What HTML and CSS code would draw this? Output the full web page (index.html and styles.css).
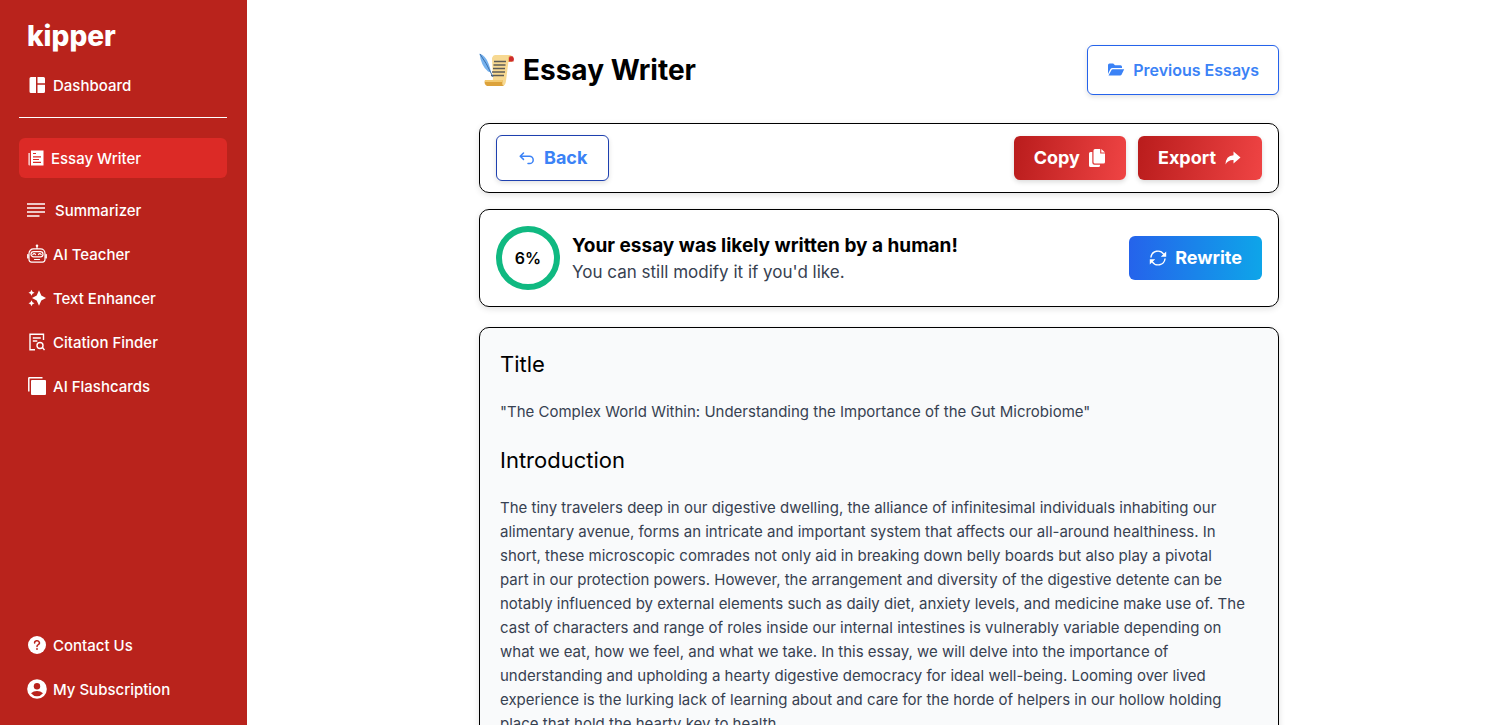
FILE: index.html
```
<!DOCTYPE html>
<html lang="en">
<head>
    <meta charset="UTF-8">
    <meta name="viewport" content="width=device-width, initial-scale=1.0">
    <title>Kipper - Essay Writer</title>
    <link rel="stylesheet" href="styles.css">
</head>
<body>
    <div class="app">
        <aside class="sidebar">
            <a href="#" class="logo">kipper</a>
            <a href="#" class="nav-link">
                <svg class="icon" viewBox="0 0 20 20" fill="currentColor"><path d="M4 2h5v16H4a1.500 1.500 0 0 1-1.500-1.500v-13A1.500 1.500 0 0 1 4 2zM10.500 2H16.500A1.500 1.500 0 0 1 18 3.500V8.300H10.500zM10.500 9.800H18v6.700a1.500 1.500 0 0 1-1.500 1.500h-6z"/></svg>
                <span>Dashboard</span>
            </a>
            <hr class="divider">
            <nav class="nav">
                <a href="#" class="nav-link active">
                    <svg class="icon icon-news" viewBox="0 0 18 20" fill="none"><path fill="#fff" d="M4 2.500H16.500v15H4zM1.500 5h1.200v12.500H2.500a1 1 0 0 1-1-1z"/><path stroke="#dc2a26" stroke-width="1.200" d="M6 5.500h3M6 8.800h8M6 11.500h6M6 14.300h8"/></svg>
                    <span>Essay Writer</span>
                </a>
                <a href="#" class="nav-link">
                    <svg class="icon icon-lines" viewBox="0 0 22 20" stroke="currentColor" stroke-width="1.600"><path d="M0 4h18M0 8h18M0 12h18M0 16h12.500"/></svg>
                    <span>Summarizer</span>
                </a>
                <a href="#" class="nav-link">
                    <svg class="icon" viewBox="0 0 20 20" fill="none" stroke="currentColor" stroke-width="1.200" stroke-linecap="round"><path d="M10 2.500v2.200M6.500 4.900h7a4.500 4.500 0 0 1 4.500 4.500v6.200a2.500 2.500 0 0 1-2.500 2.500H4.500a2.500 2.500 0 0 1-2.500-2.500V9.400a4.500 4.500 0 0 1 4.500-4.500zM.7 10.500v3.500M19.300 10.500v3.500M7.500 15.500h5"/><circle cx="10" cy="1.800" r=".7"/><rect x="4" y="7.600" width="12" height="5.200" rx="2.600"/><path d="M5.800 10.500q1.400-1.800 2.800 0M11.400 10.500q1.400-1.800 2.800 0"/></svg>
                    <span>AI Teacher</span>
                </a>
                <a href="#" class="nav-link">
                    <svg class="icon" viewBox="0 0 20 20" fill="currentColor"><path d="M12 2.200l2.300 5.300L19 10l-4.700 2.500L12 17.800l-2.300-5.300L5 10l4.700-2.500zM4.500 1.700l1 2 2 1-2 1-1 2-1-2-2-1 2-1zM4.500 12.300l1 2 2 1-2 1-1 2-1-2-2-1 2-1z"/></svg>
                    <span>Text Enhancer</span>
                </a>
                <a href="#" class="nav-link">
                    <svg class="icon" viewBox="0 0 20 20" fill="none" stroke="currentColor" stroke-width="1.400"><path d="M8 17.800H3V2.200h13.500V8M5.800 6h8M5.800 9h4.500M15.500 15.500l2 2.700"/><circle cx="13" cy="13.500" r="3"/></svg>
                    <span>Citation Finder</span>
                </a>
                <a href="#" class="nav-link">
                    <svg class="icon" viewBox="0 0 20 20"><path fill="none" stroke="currentColor" stroke-width="1.500" d="M1.800 15.500V2.300a.5.500 0 0 1 .5-.5h13.200"/><rect x="4" y="4" width="15" height="15" rx="1" fill="currentColor"/></svg>
                    <span>AI Flashcards</span>
                </a>
            </nav>
            <div class="nav-bottom">
                <a href="#" class="nav-link">
                    <svg class="icon" viewBox="0 0 20 20"><circle cx="10" cy="10" r="9" fill="currentColor"/><path fill="none" stroke="#b9231c" stroke-width="1.500" stroke-linecap="round" d="M7.600 8a2.400 2.100 0 1 1 3.700 1.600Q10 10.300 10 11.500"/><circle cx="10" cy="14" r=".9" fill="#b9231c"/></svg>
                    <span>Contact Us</span>
                </a>
                <a href="#" class="nav-link">
                    <svg class="icon" viewBox="0 0 20 20"><circle cx="10" cy="10" r="9.800" fill="currentColor"/><circle cx="10" cy="7.300" r="3.200" fill="#b9231c"/><path fill="#b9231c" d="M4 14.200Q6.500 12 10 12t6 2.200Q13.500 17.200 10 17.200T4 14.200z"/></svg>
                    <span>My Subscription</span>
                </a>
            </div>
        </aside>

        <main class="main">
            <div class="content">
                <header class="page-header">
                    <h1 class="page-title">
                        <svg class="title-icon" viewBox="0 0 36 36"><path fill="#f7d992" d="M13 6q1-3 3-3h17q-3 1-3.500 6L27 29q-.5 5-4 5H9q4-1 5-7z"/><path fill="#e9b867" d="M30 4q4-.5 4.500 2L33 10h-4q-.5-4 1-6z"/><path fill="#cf2b2b" d="M30 5.500q1-2 4-1 1.500 2 .5 5h-4.500z"/><path fill="#dca23b" d="M6 28h18q-2 5 1 6H8Q4.500 32 6 28z"/><path fill="#f3ca70" d="M6 28h18l-.5 2H6z"/><path stroke="#5d5c58" stroke-width="1.300" d="M15 9.500h12M14.500 13h12M14 16.500h12M13 20h13M12 23.500h13"/><path fill="#76b2ee" d="M.5 1.500Q7 4 9.500 11.500q2 5 2.500 9l-3-1Q2 14 .5 1.500z"/><path fill="none" stroke="#3d70ac" stroke-width="1" d="M1 2q7 10 11 19l2 4"/></svg>
                        Essay Writer
                    </h1>
                    <button type="button" class="btn btn-previous">
                        <svg class="btn-icon" viewBox="0 0 18 18" fill="currentColor"><path d="M1 13V4a1.500 1.500 0 0 1 1.500-1.500h3.700L8 4.300h5.500A1.500 1.500 0 0 1 15 5.800V7H5.500A2.500 2.500 0 0 0 3.300 8.300zM1.500 14.500l3-5.500a1.500 1.500 0 0 1 1.300-.8h11.400L14.500 13.700a1.500 1.500 0 0 1-1.300.8z"/></svg>
                        Previous Essays
                    </button>
                </header>

                <section class="card toolbar">
                    <button type="button" class="btn btn-back">
                        <svg class="btn-icon" viewBox="0 0 18 18" fill="none" stroke="currentColor" stroke-width="1.500" stroke-linecap="round" stroke-linejoin="round"><path d="M5.500 4L2.200 7.200l3.300 3.200M2.500 7.200h9a3.700 3.700 0 0 1 0 7.400H10"/></svg>
                        Back
                    </button>
                    <div class="toolbar-actions">
                        <button type="button" class="btn btn-red">
                            Copy
                            <svg class="btn-icon" viewBox="0 0 18 18" fill="currentColor"><path d="M7 0h5.200v4.500H17V13a1.500 1.500 0 0 1-1.500 1.500H7A1.500 1.500 0 0 1 5.500 13V1.500A1.500 1.500 0 0 1 7 0zM13.300 0L17 3.500h-3.700zM1 4.500A1.500 1.500 0 0 1 2.500 3H4.300v10.500A2.200 2.200 0 0 0 6.500 15.700H12v.8a1.500 1.500 0 0 1-1.500 1.500h-8A1.500 1.500 0 0 1 1 16.500z"/></svg>
                        </button>
                        <button type="button" class="btn btn-red">
                            Export
                            <svg class="btn-icon" viewBox="0 0 18 18" fill="currentColor"><path d="M9.500 2.500L16.500 8.600 9.500 14.500V11Q4 10.700 1.500 15.500 1.700 6.800 9.500 6.200z"/></svg>
                        </button>
                    </div>
                </section>

                <section class="card score">
                    <div class="score-ring">6%</div>
                    <div class="score-text">
                        <h2 class="score-title">Your essay was likely written by a human!</h2>
                        <p class="score-hint">You can still modify it if you'd like.</p>
                    </div>
                    <button type="button" class="btn btn-blue">
                        <svg class="btn-icon" viewBox="0 0 18 18" fill="none" stroke="currentColor" stroke-width="1.400" stroke-linecap="round" stroke-linejoin="round"><path d="M2 8A7 7 0 0 1 14.700 5.200M16 10A7 7 0 0 1 3.300 12.800"/><path fill="currentColor" stroke="none" d="M17.200 2.500V7.700H11.800zM.8 15.500V10.300H6.200z"/></svg>
                        Rewrite
                    </button>
                </section>

                <article class="card essay">
                    <h2>Title</h2>
                    <p>"The Complex World Within: Understanding the Importance of the Gut Microbiome"</p>
                    <h2>Introduction</h2>
                    <p>The tiny travelers deep in our digestive dwelling, the alliance of infinitesimal individuals inhabiting our alimentary avenue, forms an intricate and important system that affects our all-around healthiness. In short, these microscopic comrades not only aid in breaking down belly boards but also play a pivotal<br> part in our protection powers. However, the arrangement and diversity of the digestive detente can be notably influenced by external elements such as daily diet, anxiety levels, and medicine make use of. The cast of characters and range of roles inside our internal intestines is vulnerably variable depending on what we eat, how we feel, and what we take. In this essay, we will delve into the importance of understanding and upholding a hearty digestive democracy for ideal well-being. Looming over lived experience is the lurking lack of learning about and care for the horde of helpers in our hollow holding place that hold the hearty key to health.</p>
                </article>
            </div>
        </main>
    </div>
</body>
</html>
```
FILE: styles.css
```
* {
    box-sizing: border-box;
}

body {
    margin: 0;
    font-family: Inter, "Liberation Sans", sans-serif;
    font-size: 15px;
    line-height: 24px;
    color: #000;
    background-color: #fff;
}

h1, h2, p {
    margin: 0;
}

.app {
    display: flex;
    height: 100vh;
    overflow: hidden;
}

/* Sidebar */
.sidebar {
    display: flex;
    flex-direction: column;
    flex: 0 0 247px;
    padding: 16px 20px 16px 19px;
    background-color: #b9231c;
    color: #fff;
}

.logo {
    padding: 0 8px;
    margin-bottom: 9px;
    font-size: 28px;
    line-height: 40px;
    font-weight: 800;
    color: #fff;
    text-decoration: none;
}

.nav-link {
    display: flex;
    align-items: center;
    gap: 6px;
    height: 40px;
    padding: 0 8px;
    border-radius: 6px;
    color: #fff;
    font-weight: 500;
    text-decoration: none;
}

.nav-link span {
    padding-top: 1px;
}

.nav-link.active {
    margin-bottom: 8px;
    background-color: #dc2a26;
}

.icon {
    width: 20px;
    height: 20px;
}

.icon-news {
    width: 18px;
}

.icon-lines {
    width: 22px;
}

.divider {
    width: 100%;
    margin: 12px 0 20px;
    border: 0;
    border-top: 1px solid #fff;
}

.nav, .nav-bottom {
    display: flex;
    flex-direction: column;
    gap: 4px;
}

.nav-bottom {
    margin-top: auto;
}

/* Main column */
.main {
    flex: 1;
    min-width: 0;
    padding: 45px 16px 40px 22px;
    overflow-y: auto;
    scrollbar-width: none;
}

.content {
    max-width: 800px;
    margin: 0 auto;
}

.page-header {
    display: flex;
    justify-content: space-between;
    align-items: center;
    margin-bottom: 28px;
}

.page-title {
    display: flex;
    align-items: center;
    gap: 8px;
    font-size: 28px;
    line-height: 36px;
    font-weight: 700;
}

.title-icon {
    width: 36px;
    height: 36px;
}

.card {
    border: 1px solid #000;
    border-radius: 10px;
    box-shadow: 0 2px 6px rgba(0, 0, 0, 0.12);
}

/* Buttons */
.btn {
    display: flex;
    align-items: center;
    gap: 8px;
    height: 44px;
    padding: 0 20px;
    border: 0;
    border-radius: 6px;
    font-family: inherit;
    font-size: 18px;
    line-height: 28px;
    font-weight: 700;
    color: #fff;
    cursor: pointer;
}

.btn-icon {
    width: 18px;
    height: 18px;
}

.btn-previous, .btn-back {
    border: 1px solid #2563eb;
    background-color: #fff;
    color: #3b82f6;
    box-shadow: 0 2px 5px rgba(0, 0, 0, 0.12);
}

.btn-previous {
    height: 50px;
    padding: 0 19px;
    font-size: 16px;
    font-weight: 600;
}

.btn-back {
    height: 46px;
    padding: 0 21px;
    border-color: #1e40af;
}

.btn-red {
    background: linear-gradient(100deg, #b91c1c, #ef4444);
    box-shadow: 0 2px 5px rgba(0, 0, 0, 0.15);
}

.btn-blue {
    background: linear-gradient(90deg, #2563eb, #0ea5e9);
}

.toolbar {
    display: flex;
    justify-content: space-between;
    align-items: center;
    padding: 11px 16px;
    margin-bottom: 16px;
}

.toolbar-actions {
    display: flex;
    gap: 12px;
}

/* AI detection result */
.score {
    display: flex;
    align-items: center;
    gap: 12px;
    padding: 16px;
    margin-bottom: 20px;
}

.score-ring {
    display: flex;
    justify-content: center;
    align-items: center;
    width: 64px;
    height: 64px;
    border: 6px solid #10b981;
    border-radius: 50%;
    font-size: 16px;
    font-weight: 600;
}

.score-text {
    flex: 1;
    padding-top: 2px;
}

.score-title {
    font-size: 19px;
    line-height: 26px;
    font-weight: 700;
}

.score-hint {
    font-size: 17px;
    line-height: 26px;
    color: #374151;
}

/* Essay text */
.essay {
    padding: 20px 30px 20px 20px;
    background-color: #f9fafb;
}

.essay h2 {
    margin-bottom: 20px;
    font-size: 22px;
    line-height: 32px;
    font-weight: 400;
}

.essay p {
    margin-bottom: 20px;
    color: #374151;
}
```
